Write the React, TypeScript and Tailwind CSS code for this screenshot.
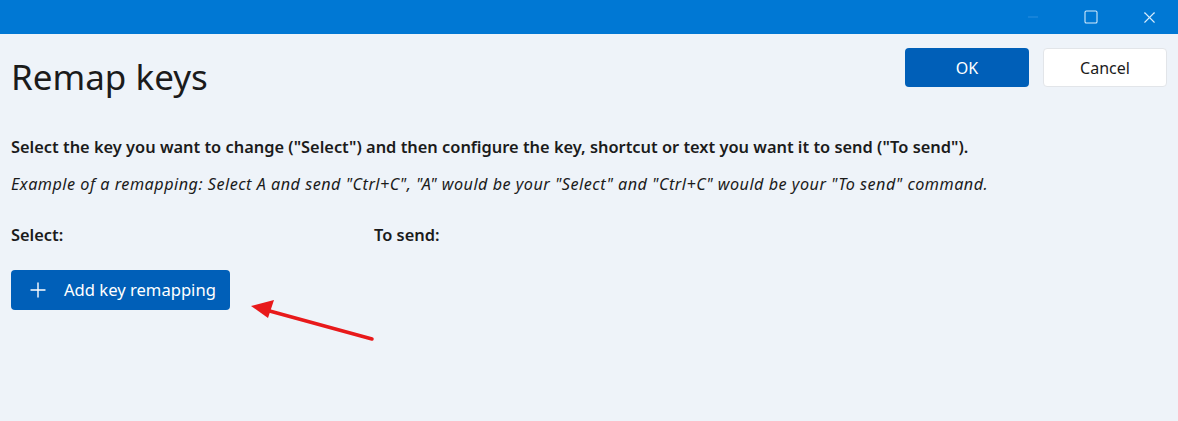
import { Plus, Square, X, Minus } from 'lucide-react'

const font = { fontFamily: '"Segoe UI", "Noto Sans", "Open Sans", sans-serif' }

export default function App() {
  return (
    <div className="relative w-[1178px] h-[421px] bg-[#eef3f9] text-[#1b1b1b] overflow-hidden" style={font}>
      {/* Title bar */}
      <div className="h-[34px] bg-[#0078d4] flex justify-end items-center">
        <div className="w-[58px] h-full flex items-center justify-center text-[#3f9be6]">
          <Minus className="w-[16px] h-[16px]" strokeWidth={1} />
        </div>
        <div className="w-[58px] h-full flex items-center justify-center text-[#d6ecfc]">
          <Square className="w-[16px] h-[16px]" strokeWidth={1.6} />
        </div>
        <div className="w-[58px] h-full flex items-center justify-center text-[#d6ecfc]">
          <X className="w-[19px] h-[19px]" strokeWidth={1.4} />
        </div>
      </div>

      <div className="px-[11px]">
        <div className="flex justify-between items-start pt-[14px]">
          <h1 className="text-[35px] leading-[48px] mt-[5px] text-[#1b1b1b]">Remap keys</h1>
          <div className="flex gap-[14px]">
            <button className="w-[124px] h-[39px] rounded-[4px] bg-[#005fb8] text-white text-[16px]">OK</button>
            <button className="w-[124px] h-[39px] rounded-[4px] bg-white border border-[#e2e5e9] text-[#1b1b1b] text-[16px]">Cancel</button>
          </div>
        </div>

        <p className="mt-[35px] text-[16.4px] font-semibold leading-[22px]">
          Select the key you want to change ("Select") and then configure the key, shortcut or text you want it to send ("To send").
        </p>
        <p className="mt-[15px] text-[16.2px] italic leading-[22px] tracking-[0.5px]">
          Example of a remapping: Select A and send "Ctrl+C", "A" would be your "Select" and "Ctrl+C" would be your "To send" command.
        </p>

        <div className="mt-[29px] flex text-[16.4px] font-semibold leading-[22px]">
          <span className="w-[363px]">Select:</span>
          <span>To send:</span>
        </div>

        <button className="mt-[24px] w-[219px] h-[40px] rounded-[4px] bg-[#005fb8] text-white flex items-center pl-[15px] gap-[14px] text-[16.6px]">
          <Plus className="w-[24px] h-[24px]" strokeWidth={1.4} />
          <span>Add key remapping</span>
        </button>
      </div>

      {/* annotation arrow */}
      <svg className="absolute left-0 top-0" width="1178" height="421">
        <line x1="372" y1="339" x2="266" y2="310" stroke="#e8191b" strokeWidth="3.5" strokeLinecap="round" />
        <polygon points="251,306 274,300 268,318" fill="#e8191b" />
      </svg>
    </div>
  )
}
